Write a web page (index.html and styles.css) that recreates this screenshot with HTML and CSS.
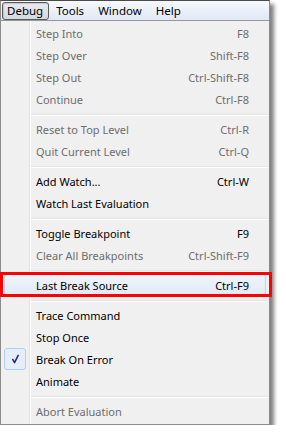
FILE: index.html
```html
<!DOCTYPE html>
<html>
<head>
<meta charset="utf-8">
<link rel="stylesheet" href="styles.css">
</head>
<body>
<div class="frame">
  <div class="menubar">
    <span class="mb-item active">Debug</span>
    <span class="mb-item">Tools</span>
    <span class="mb-item">Window</span>
    <span class="mb-item">Help</span>
  </div>
  <div class="menu">
    <div class="row dis"><span class="label">Step Into</span><span class="key">F8</span></div>
    <div class="row dis"><span class="label">Step Over</span><span class="key">Shift-F8</span></div>
    <div class="row dis"><span class="label">Step Out</span><span class="key">Ctrl-Shift-F8</span></div>
    <div class="row dis"><span class="label">Continue</span><span class="key">Ctrl-F8</span></div>
    <div class="sep"></div>
    <div class="row dis"><span class="label">Reset to Top Level</span><span class="key">Ctrl-R</span></div>
    <div class="row dis"><span class="label">Quit Current Level</span><span class="key">Ctrl-Q</span></div>
    <div class="sep"></div>
    <div class="row"><span class="label">Add Watch...</span><span class="key">Ctrl-W</span></div>
    <div class="row"><span class="label">Watch Last Evaluation</span><span class="key"></span></div>
    <div class="sep"></div>
    <div class="row"><span class="label">Toggle Breakpoint</span><span class="key">F9</span></div>
    <div class="row dis"><span class="label">Clear All Breakpoints</span><span class="key">Ctrl-Shift-F9</span></div>
    <div class="sep"></div>
    <div class="row hot"><span class="label">Last Break Source</span><span class="key">Ctrl-F9</span><span class="callout"></span></div>
    <div class="sep"></div>
    <div class="row"><span class="label">Trace Command</span><span class="key"></span></div>
    <div class="row"><span class="label">Stop Once</span><span class="key"></span></div>
    <div class="row checked"><span class="check"><svg width="22" height="22" viewBox="0 0 22 22"><path d="M8.5 11.5 L10.5 15 L14.5 7" fill="none" stroke="#1a2a8c" stroke-width="1.7" stroke-linecap="round" stroke-linejoin="round"/></svg></span><span class="label">Break On Error</span><span class="key"></span></div>
    <div class="row"><span class="label">Animate</span><span class="key"></span></div>
    <div class="sep"></div>
    <div class="row dis"><span class="label">Abort Evaluation</span><span class="key"></span></div>
  </div>
</div>
</body>
</html>
```
FILE: styles.css
```css
html, body {
  margin: 0;
  padding: 0;
  background: #ffffff;
}
body {
  font-family: "Noto Sans", "Open Sans", "DejaVu Sans", sans-serif;
  font-size: 11px;
  color: #000;
}
.frame {
  width: 268px;
  border: 1px solid #8c8c8c;
  border-top: 1px solid #4a4a4a;
  box-shadow: 4px 4px 4px rgba(0, 0, 0, 0.5);
  background: #f0f0f0;
}
.menubar {
  height: 19px;
  display: flex;
  align-items: stretch;
  padding-left: 1px;
  background: linear-gradient(#f7f9fd, #dfe8f5);
  font-size: 11.5px;
}
.mb-item {
  display: flex;
  align-items: center;
  padding: 0 6px;
  border: 1px solid transparent;
  margin-top: 1px;
  line-height: 1;
}
.mb-item.active {
  border-color: #5a5a5a;
  border-radius: 3px;
  background: linear-gradient(#e8ebf0, #d4d9e1);
  box-shadow: inset 1px 1px 1px rgba(0,0,0,0.15);
  padding: 0 5px 0 4px;
}
.menu {
  border-top: 1px solid #979797;
  padding: 1px 1px 2px 1px;
  background: linear-gradient(to right, #f0f0f0 0 28px, #e2e3e3 28px 29px, #ffffff 29px 30px, #f0f0f0 30px);
}
.row {
  position: relative;
  height: 22px;
  display: flex;
  align-items: center;
  padding-left: 34px;
  padding-right: 19px;
}
.row .label {
  flex: 1;
  white-space: nowrap;
}
.row .key {
  white-space: nowrap;
}
.row.dis {
  color: #6d6d6d;
}
.sep {
  height: 8px;
  margin-left: 29px;
  margin-right: 1px;
  background: linear-gradient(transparent 0 4px, #e2e3e3 4px 5px, #ffffff 5px 6px, transparent 6px);
}
.row.hot {
  z-index: 1;
}
.row.hot::before {
  content: "";
  position: absolute;
  left: 2px;
  right: 2px;
  top: 0;
  bottom: 0;
  border: 1px solid #b8d2ef;
  border-radius: 3px;
  background: linear-gradient(#f0f5fb, #e1eaf7);
  z-index: -1;
}
.callout {
  position: absolute;
  left: -2px;
  right: -4px;
  top: -2px;
  bottom: -1px;
  border: 3px solid #ff0000;
}
.check {
  position: absolute;
  left: 2px;
  top: 0;
  width: 20px;
  height: 20px;
  border: 1px solid #aecff2;
  border-radius: 3px;
  background: #e6eefb;
  display: flex;
  align-items: center;
  justify-content: center;
}
.check svg {
  display: block;
}
```
